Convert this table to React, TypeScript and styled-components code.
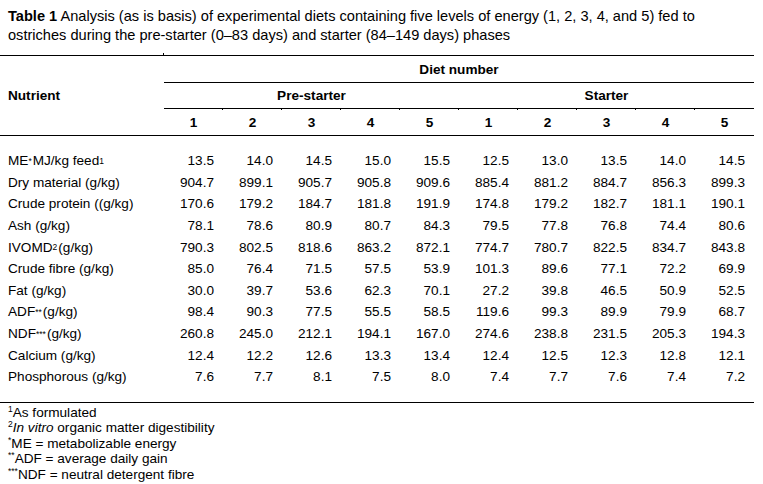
import * as React from 'react';
import styled, { createGlobalStyle } from 'styled-components';

const GlobalStyle = createGlobalStyle`
  html, body {
    margin: 0;
    padding: 0;
    background: #fff;
  }
  body {
    font-family: "Liberation Sans", Arial, sans-serif;
    color: #000;
  }
`;

const Page = styled.div`
  width: 763px;
  font-size: 13.6px;
`;

const Title = styled.div`
  padding: 7px 8px 0;
  font-size: 14.6px;
  line-height: 19px;
  white-space: nowrap;
  margin-bottom: 10px;
`;

const HeadGrid = styled.div`
  display: grid;
  grid-template-columns: 164px repeat(10, 59px);
  grid-template-rows: 28px 26px 27px;
  width: 754px;
  font-weight: bold;
`;

const NutrientHead = styled.div`
  grid-column: 1;
  grid-row: 1 / span 3;
  position: relative;
  display: flex;
  align-items: center;
  padding-left: 8px;
  border-top: 1px solid #000;
  border-bottom: 1px solid #000;

  &::after {
    content: '';
    position: absolute;
    right: 0;
    top: -3px;
    width: 1px;
    height: 2px;
    background: #000;
  }
`;

const GroupHead = styled.div<{ $from: number; $to: number; $row: number; $top?: boolean }>`
  grid-column: ${(p) => p.$from} / ${(p) => p.$to};
  grid-row: ${(p) => p.$row};
  position: relative;
  display: flex;
  align-items: center;
  justify-content: center;
  border-top: ${(p) => (p.$top ? '1px solid #000' : 'none')};
  border-bottom: 1px solid #000;
`;

const NumHead = styled.div<{ $tick?: boolean }>`
  grid-row: 3;
  position: relative;
  display: flex;
  align-items: center;
  justify-content: center;
  border-bottom: 1px solid #000;

  &::before {
    content: '';
    display: ${(p) => (p.$tick ? 'block' : 'none')};
    position: absolute;
    left: -1px;
    top: -1px;
    width: 1px;
    height: 2px;
    background: #000;
  }
`;

const BodyGrid = styled.div`
  display: grid;
  grid-template-columns: 164px repeat(10, 59px);
  grid-auto-rows: 21.6px;
  width: 754px;
  padding: 14px 0 14px;
  border-bottom: 1px solid #000;
`;

const Label = styled.div`
  display: flex;
  align-items: center;
  padding-left: 8px;
  white-space: nowrap;
`;

const Value = styled.div`
  display: flex;
  align-items: center;
  justify-content: flex-end;
  padding-right: 9px;
`;

const Sup = styled.sup`
  font-size: 8.5px;
  line-height: 0;
  vertical-align: 5px;
  margin-right: 1px;
`;

const Notes = styled.div`
  padding: 2px 8px 0;
  line-height: 15.5px;
`;

const Note = styled.div`
  white-space: nowrap;
`;

const NoteMark = styled.sup`
  font-size: 8.5px;
  line-height: 0;
  vertical-align: 5px;
`;

type Row = { label: React.ReactNode; values: string[] };

const rows: Row[] = [
  {
    label: (
      <>
        ME<Sup>*</Sup> MJ/kg feed<Sup>1</Sup>
      </>
    ),
    values: ['13.5', '14.0', '14.5', '15.0', '15.5', '12.5', '13.0', '13.5', '14.0', '14.5'],
  },
  {
    label: 'Dry material (g/kg)',
    values: ['904.7', '899.1', '905.7', '905.8', '909.6', '885.4', '881.2', '884.7', '856.3', '899.3'],
  },
  {
    label: 'Crude protein ((g/kg)',
    values: ['170.6', '179.2', '184.7', '181.8', '191.9', '174.8', '179.2', '182.7', '181.1', '190.1'],
  },
  {
    label: 'Ash (g/kg)',
    values: ['78.1', '78.6', '80.9', '80.7', '84.3', '79.5', '77.8', '76.8', '74.4', '80.6'],
  },
  {
    label: (
      <>
        IVOMD<Sup>2</Sup> (g/kg)
      </>
    ),
    values: ['790.3', '802.5', '818.6', '863.2', '872.1', '774.7', '780.7', '822.5', '834.7', '843.8'],
  },
  {
    label: 'Crude fibre (g/kg)',
    values: ['85.0', '76.4', '71.5', '57.5', '53.9', '101.3', '89.6', '77.1', '72.2', '69.9'],
  },
  {
    label: 'Fat (g/kg)',
    values: ['30.0', '39.7', '53.6', '62.3', '70.1', '27.2', '39.8', '46.5', '50.9', '52.5'],
  },
  {
    label: (
      <>
        ADF<Sup>**</Sup> (g/kg)
      </>
    ),
    values: ['98.4', '90.3', '77.5', '55.5', '58.5', '119.6', '99.3', '89.9', '79.9', '68.7'],
  },
  {
    label: (
      <>
        NDF<Sup>***</Sup> (g/kg)
      </>
    ),
    values: ['260.8', '245.0', '212.1', '194.1', '167.0', '274.6', '238.8', '231.5', '205.3', '194.3'],
  },
  {
    label: 'Calcium (g/kg)',
    values: ['12.4', '12.2', '12.6', '13.3', '13.4', '12.4', '12.5', '12.3', '12.8', '12.1'],
  },
  {
    label: 'Phosphorous (g/kg)',
    values: ['7.6', '7.7', '8.1', '7.5', '8.0', '7.4', '7.7', '7.6', '7.4', '7.2'],
  },
];

const dietNumbers = [1, 2, 3, 4, 5, 1, 2, 3, 4, 5];

const App: React.FC = () => {
  return (
    <>
      <GlobalStyle />
      <Page>
        <Title>
          <b>Table 1</b> Analysis (as is basis) of experimental diets containing five levels of energy (1, 2, 3, 4, and 5) fed to
          <br />
          ostriches during the pre-starter (0–83 days) and starter (84–149 days) phases
        </Title>

        <HeadGrid>
          <NutrientHead>Nutrient</NutrientHead>
          <GroupHead $from={2} $to={12} $row={1} $top>
            Diet number
          </GroupHead>
          <GroupHead $from={2} $to={7} $row={2}>
            Pre-starter
          </GroupHead>
          <GroupHead $from={7} $to={12} $row={2}>
            Starter
          </GroupHead>
          {dietNumbers.map((n, i) => (
            <NumHead key={i} $tick={i > 0}>
              {n}
            </NumHead>
          ))}
        </HeadGrid>

        <BodyGrid>
          {rows.map((r, i) => (
            <React.Fragment key={i}>
              <Label>{r.label}</Label>
              {r.values.map((v, j) => (
                <Value key={j}>{v}</Value>
              ))}
            </React.Fragment>
          ))}
        </BodyGrid>

        <Notes>
          <Note>
            <NoteMark>1</NoteMark>As formulated
          </Note>
          <Note>
            <NoteMark>2</NoteMark>
            <i>In vitro</i> organic matter digestibility
          </Note>
          <Note>
            <NoteMark>*</NoteMark>ME = metabolizable energy
          </Note>
          <Note>
            <NoteMark>**</NoteMark>ADF = average daily gain
          </Note>
          <Note>
            <NoteMark>***</NoteMark>NDF = neutral detergent fibre
          </Note>
        </Notes>
      </Page>
    </>
  );
};

export default App;
